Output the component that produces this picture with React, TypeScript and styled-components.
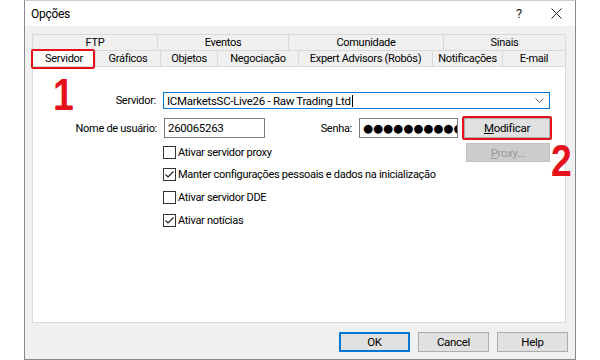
import React from "react";
import styled, { createGlobalStyle, css } from "styled-components";

const Global = createGlobalStyle`
  html, body { margin: 0; padding: 0; background: #ffffff; }
  body { font-family: Roboto, "Noto Sans", sans-serif; font-size: 11px; letter-spacing: -0.3px; color: #000; }
`;

const Page = styled.div`
  width: 600px;
  height: 360px;
  background: #fff;
  padding-left: 24px;
  box-sizing: border-box;
  position: relative;
  overflow: hidden;
`;

const Window = styled.div`
  width: 552px;
  height: 360px;
  box-sizing: border-box;
  border: 1px solid #8a8a8a;
  border-top: 1px solid #d0d0d0;
  display: flex;
  flex-direction: column;
  background: #f0f0f0;
`;

const TitleBar = styled.div`
  height: 25px;
  background: #fff;
  display: flex;
  align-items: center;
  padding-left: 6px;
  font-size: 12px;
`;

const Title = styled.span`
  flex: 1;
`;

const TitleBtn = styled.span<{ $w: number; $mr: number }>`
  width: ${(p) => p.$w}px;
  margin-right: ${(p) => p.$mr}px;
  display: flex;
  justify-content: center;
  align-items: center;
  font-size: 13px;
  color: #222;
`;

const Body = styled.div`
  flex: 1;
  padding: 8px 0 0 7px;
  display: flex;
  flex-direction: column;
`;

const TabRow = styled.div`
  display: flex;
  height: 16px;
`;

const Tab = styled.div<{ $w: number; $selected?: boolean }>`
  width: ${(p) => p.$w}px;
  box-sizing: border-box;
  border: 1px solid #d9d9d9;
  border-bottom: none;
  margin-left: -1px;
  &:first-child { margin-left: 0; }
  display: flex;
  align-items: center;
  justify-content: center;
  line-height: 1;
  background: #f0f0f0;
  ${(p) =>
    p.$selected &&
    css`
      background: #fff;
      position: relative;
      z-index: 2;
      &::after {
        content: "";
        position: absolute;
        left: -2px;
        top: -2px;
        right: 0px;
        bottom: -3px;
        border: 2px solid #e5121b;
        border-radius: 2px;
      }
    `}
`;

const Panel = styled.div`
  width: 534px;
  height: 257px;
  box-sizing: border-box;
  background: #fff;
  border: 1px solid #d9d9d9;
  padding: 25px 15px 0 0;
  display: flex;
  flex-direction: column;
`;

const Row = styled.div<{ $mt?: number }>`
  display: flex;
  align-items: center;
  margin-top: ${(p) => p.$mt ?? 0}px;
`;

const Label = styled.span<{ $w: number }>`
  width: ${(p) => p.$w}px;
  text-align: right;
  padding-right: 7px;
  box-sizing: border-box;
  flex-shrink: 0;
`;

const Combo = styled.div`
  width: 390px;
  height: 17px;
  box-sizing: border-box;
  border: 1px solid #0078d7;
  display: flex;
  align-items: center;
  padding-left: 3px;
  font-size: 11.5px;
`;

const ComboText = styled.span`
  flex: 1;
  display: flex;
  align-items: center;
`;

const Caret = styled.span`
  display: inline-block;
  width: 1px;
  height: 12px;
  background: #000;
  margin-left: 1px;
`;

const Chevron = styled.svg`
  width: 9px;
  height: 6px;
  margin-right: 5px;
`;

const Input = styled.div<{ $w: number }>`
  width: ${(p) => p.$w}px;
  height: 20px;
  box-sizing: border-box;
  border: 1px solid #7a7a7a;
  display: flex;
  align-items: center;
  padding-left: 3px;
  overflow: hidden;
  white-space: nowrap;
  flex-shrink: 0;
  font-size: 11.5px;
`;

const Dots = styled.span`
  font-family: "DejaVu Sans", sans-serif;
  font-size: 11.5px;
  letter-spacing: 0;
  color: #000;
`;

const Button = styled.div<{ $w: number; $h?: number; $disabled?: boolean; $default?: boolean; $ring?: boolean }>`
  width: ${(p) => p.$w}px;
  height: ${(p) => p.$h ?? 20}px;
  box-sizing: border-box;
  border: 1px solid #adadad;
  background: #e1e1e1;
  display: flex;
  align-items: center;
  justify-content: center;
  flex-shrink: 0;
  position: relative;
  font-size: 11.5px;
  ${(p) =>
    p.$disabled &&
    css`
      background: #cccccc;
      border-color: #bfbfbf;
      color: #9a9a9a;
    `}
  ${(p) =>
    p.$default &&
    css`
      border: 2px solid #0078d7;
    `}
  ${(p) =>
    p.$ring &&
    css`
      &::after {
        content: "";
        position: absolute;
        left: -3px;
        top: -3px;
        right: -3px;
        bottom: -3px;
        border: 2px solid #e5121b;
        border-radius: 2px;
      }
    `}
`;

const Spacer = styled.span`
  flex: 1;
`;

const U = styled.span`
  text-decoration: underline;
`;

const CheckRow = styled.div<{ $mt?: number }>`
  display: flex;
  align-items: center;
  margin-left: 130px;
  margin-top: ${(p) => p.$mt ?? 0}px;
  height: 14px;
`;

const Box = styled.span`
  width: 13px;
  height: 13px;
  box-sizing: border-box;
  border: 1px solid #333;
  background: #fff;
  margin-right: 2px;
  display: flex;
  align-items: center;
  justify-content: center;
`;

const Footer = styled.div`
  display: flex;
  gap: 8px;
  padding: 9px 0 0 307px;
`;

const Annot = styled.span<{ $x: number; $y: number }>`
  position: absolute;
  left: ${(p) => p.$x}px;
  top: ${(p) => p.$y}px;
  font-family: "Liberation Sans", Arial, sans-serif;
  font-weight: bold;
  font-size: 44px;
  letter-spacing: 0;
  line-height: 1;
  color: #e5121b;
  transform: scaleX(0.85);
  transform-origin: left top;
`;

const Check = ({ checked, label, mt }: { checked?: boolean; label: string; mt?: number }) => (
  <CheckRow $mt={mt}>
    <Box>
      {checked && (
        <svg width="11" height="11" viewBox="0 0 11 11">
          <path d="M1.5 5.5 L4 8 L9.5 2.5" fill="none" stroke="#222" strokeWidth="1.2" />
        </svg>
      )}
    </Box>
    <span>{label}</span>
  </CheckRow>
);

export default function App() {
  return (
    <>
      <Global />
      <Page>
        <Window>
          <TitleBar>
            <Title>Opções</Title>
            <TitleBtn $w={20} $mr={17}>?</TitleBtn>
            <TitleBtn $w={20} $mr={9}>
              <svg width="11" height="11" viewBox="0 0 11 11">
                <path d="M0.5 0.5 L10.5 10.5 M10.5 0.5 L0.5 10.5" stroke="#222" strokeWidth="1" fill="none" />
              </svg>
            </TitleBtn>
          </TitleBar>
          <Body>
            <TabRow>
              <Tab $w={126}>FTP</Tab>
              <Tab $w={132}>Eventos</Tab>
              <Tab $w={156}>Comunidade</Tab>
              <Tab $w={123}>Sinais</Tab>
            </TabRow>
            <TabRow>
              <Tab $w={64} $selected>Servidor</Tab>
              <Tab $w={66}>Gráficos</Tab>
              <Tab $w={58}>Objetos</Tab>
              <Tab $w={82}>Negociação</Tab>
              <Tab $w={135}>Expert Advisors (Robôs)</Tab>
              <Tab $w={71}>Notificações</Tab>
              <Tab $w={64}>E-mail</Tab>
            </TabRow>
            <Panel>
              <Row>
                <Label $w={130}>Servidor:</Label>
                <Combo>
                  <ComboText>
                    ICMarketsSC-Live26 - Raw Trading Ltd
                    <Caret />
                  </ComboText>
                  <Chevron viewBox="0 0 9 6">
                    <path d="M0.5 0.5 L4.5 4.5 L8.5 0.5" fill="none" stroke="#666" strokeWidth="1" />
                  </Chevron>
                </Combo>
              </Row>
              <Row $mt={9}>
                <Label $w={131}>Nome de usuário:</Label>
                <Input $w={101}>260065263</Input>
                <Label $w={94}>Senha:</Label>
                <Input $w={99}>
                  <Dots>●●●●●●●●●●●</Dots>
                </Input>
                <Spacer />
                <Button $w={86} $ring>
                  <span>
                    <U>M</U>odificar
                  </span>
                </Button>
              </Row>
              <Row $mt={5}>
                <Check label="Ativar servidor proxy" />
                <Spacer />
                <Button $w={84} $h={19} $disabled>
                  <span>
                    <U>P</U>roxy...
                  </span>
                </Button>
              </Row>
              <Check checked label="Manter configurações pessoais e dados na inicialização" mt={5} />
              <Check label="Ativar servidor DDE" mt={9} />
              <Check checked label="Ativar notícias" mt={9} />
            </Panel>
            <Footer>
              <Button $w={71} $default>OK</Button>
              <Button $w={71}>Cancel</Button>
              <Button $w={71}>Help</Button>
            </Footer>
          </Body>
        </Window>
        <Annot $x={53} $y={73}>1</Annot>
        <Annot $x={551} $y={139}>2</Annot>
      </Page>
    </>
  );
}
